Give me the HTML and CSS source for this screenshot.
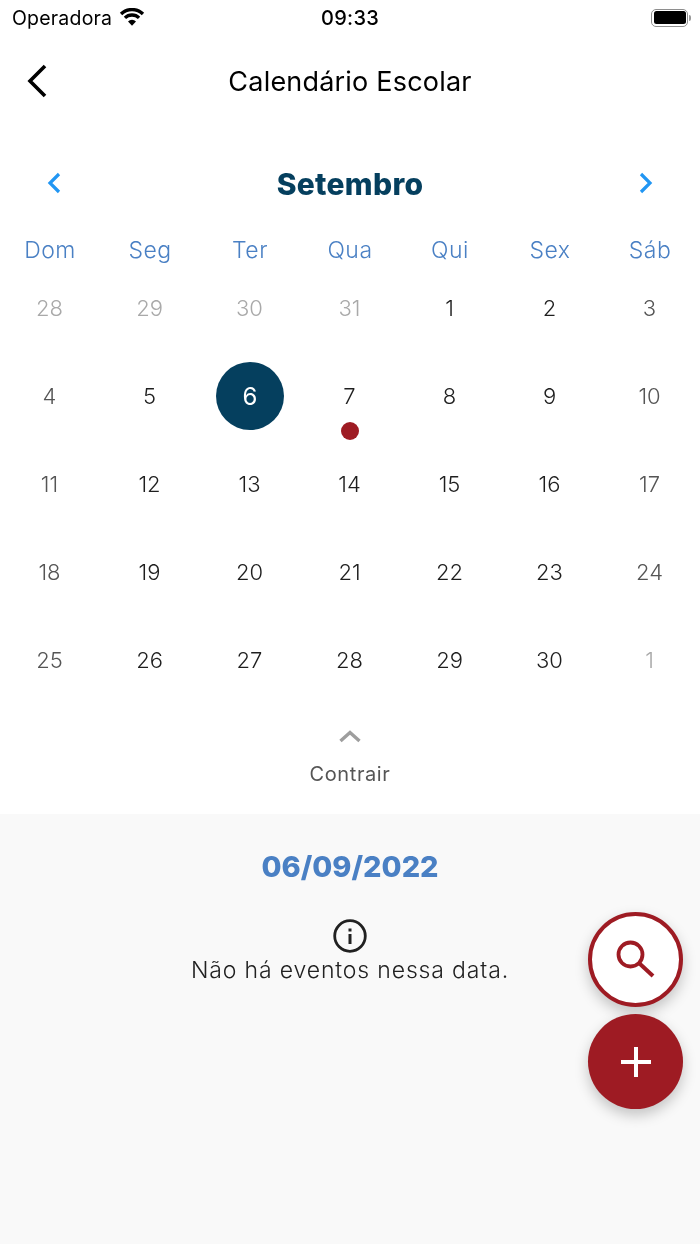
FILE: index.html
```html
<!DOCTYPE html>
<html lang="pt">
<head>
<meta charset="utf-8">
<title>Calendário Escolar</title>
<link rel="stylesheet" href="styles.css">
</head>
<body>
<div class="screen">
  <header class="status">
    <div class="status-left">
      <span class="carrier">Operadora</span>
      <svg class="wifi" width="26" height="18" viewBox="0 0 26 18"><path d="M2.040 6.040A15.500 15.500 0 0 1 23.960 6.040M5.930 9.930A10 10 0 0 1 20.070 9.930" fill="none" stroke="#000" stroke-width="3.300"/><path d="M13 17.800L9 13.500A5.600 5.600 0 0 1 17 13.500Z" fill="#000"/></svg>
    </div>
    <span class="clock">09:33</span>
    <div class="battery-wrap">
      <div class="battery"><div class="battery-fill"></div></div>
      <div class="battery-tip"></div>
    </div>
  </header>

  <nav class="nav">
    <svg class="back" width="24" height="34" viewBox="0 0 24 34"><path d="M20 2L5 17l15 15" fill="none" stroke="#000" stroke-width="3.600"/></svg>
    <h1 class="title">Calendário Escolar</h1>
  </nav>

  <section class="calendar">
    <div class="month-row">
      <svg class="month-arrow" width="16" height="22" viewBox="0 0 16 22"><path d="M13 2L4 11l9 9" fill="none" stroke="#2196f3" stroke-width="3.200"/></svg>
      <h2 class="month">Setembro</h2>
      <svg class="month-arrow" width="16" height="22" viewBox="0 0 16 22"><path d="M3 2l9 9-9 9" fill="none" stroke="#2196f3" stroke-width="3.200"/></svg>
    </div>
    <div class="weekdays">
      <span>Dom</span><span>Seg</span><span>Ter</span><span>Qua</span><span>Qui</span><span>Sex</span><span>Sáb</span>
    </div>
    <div class="days">
      <div class="day muted">28</div><div class="day muted">29</div><div class="day muted">30</div><div class="day muted">31</div><div class="day">1</div><div class="day">2</div><div class="day weekend">3</div>
      <div class="day weekend">4</div><div class="day">5</div><div class="day"><span class="selected">6</span></div><div class="day">7<span class="event-dot"></span></div><div class="day">8</div><div class="day">9</div><div class="day weekend">10</div>
      <div class="day weekend">11</div><div class="day">12</div><div class="day">13</div><div class="day">14</div><div class="day">15</div><div class="day">16</div><div class="day weekend">17</div>
      <div class="day weekend">18</div><div class="day">19</div><div class="day">20</div><div class="day">21</div><div class="day">22</div><div class="day">23</div><div class="day weekend">24</div>
      <div class="day weekend">25</div><div class="day">26</div><div class="day">27</div><div class="day">28</div><div class="day">29</div><div class="day">30</div><div class="day muted">1</div>
    </div>
    <div class="collapse">
      <svg width="24" height="14" viewBox="0 0 24 14"><path d="M2.500 12L12 3.500 21.500 12" fill="none" stroke="#9e9e9e" stroke-width="3.400"/></svg>
      <span class="collapse-label">Contrair</span>
    </div>
  </section>

  <section class="events">
    <div class="event-date">06/09/2022</div>
    <svg class="info" width="36" height="36" viewBox="0 0 36 36"><circle cx="18" cy="18" r="15.300" fill="none" stroke="#212121" stroke-width="2.800"/><rect x="16.500" y="16" width="3" height="10" fill="#212121"/><rect x="16.500" y="10.500" width="3" height="3" fill="#212121"/></svg>
    <p class="empty">Não há eventos nessa data.</p>
    <button class="fab fab-search" aria-label="Buscar">
      <svg width="44" height="44" viewBox="0 0 44 44"><circle cx="16.500" cy="16.500" r="12" fill="none" stroke="#9e1b23" stroke-width="3.800"/><path d="M25.500 25.500L39 38" fill="none" stroke="#9e1b23" stroke-width="4"/></svg>
    </button>
    <button class="fab fab-add" aria-label="Adicionar">
      <svg width="34" height="34" viewBox="0 0 34 34"><path d="M17 2v30M2 17h30" fill="none" stroke="#fff" stroke-width="4"/></svg>
    </button>
  </section>
</div>
</body>
</html>
```

FILE: styles.css
```css
* { box-sizing: border-box; }
html, body { margin: 0; padding: 0; }
body { background: #fff; font-family: "Inter", "Liberation Sans", sans-serif; }

.screen { width: 700px; height: 1244px; display: flex; flex-direction: column; overflow: hidden; will-change: transform; }

.status { height: 38px; padding: 0 9px 3px 12px; display: flex; align-items: center; justify-content: space-between; position: relative; color: #000; flex: none; }
.status-left { display: flex; align-items: center; gap: 7px; }
.carrier { font-size: 19.500px; letter-spacing: 0.2px; }
.wifi { display: block; margin-top: -1px; }
.clock { font-size: 20px; font-weight: 500; position: absolute; left: 0; right: 0; text-align: center; top: 6px; letter-spacing: 0.3px; }
.battery-wrap { display: flex; align-items: center; gap: 1px; }
.battery { width: 37px; height: 18px; border: 1.500px solid #8e8e8e; border-radius: 5px; padding: 1.500px; }
.battery-fill { width: 100%; height: 100%; background: #000; border-radius: 2.500px; }
.battery-tip { width: 2px; height: 6px; background: #9a9a9a; border-radius: 0 2px 2px 0; }

.nav { height: 86px; flex: none; display: flex; align-items: center; justify-content: center; position: relative; }
.back { position: absolute; left: 25px; top: 26px; }
.title { margin: 0; font-size: 27px; font-weight: 400; color: #000; letter-spacing: 0.2px; }

.calendar { flex: none; height: 690px; display: flex; flex-direction: column; }
.month-row { height: 38px; margin-top: 41px; padding: 0 46px; display: flex; align-items: center; justify-content: space-between; flex: none; }
.month-arrow { margin-top: -3px; }
.month { margin: 0; font-size: 30px; font-weight: 800; color: #053f5e; line-height: 38px; letter-spacing: 0.3px; }
.weekdays { display: grid; grid-template-columns: repeat(7, 100px); margin-top: 32px; height: 29px; align-items: center; text-align: center; font-size: 23px; font-weight: 300; color: #4a80c4; letter-spacing: 0.5px; flex: none; }
.days { display: grid; grid-template-columns: repeat(7, 100px); grid-auto-rows: 88px; flex: none; }
.day { position: relative; display: flex; align-items: center; justify-content: center; font-size: 22px; font-weight: 300; color: #1e1e1e; height: 88px; padding-right: 1px; }
.day.muted { color: #a9a9a9; }
.day.weekend { color: #555; }
.selected { width: 68px; height: 68px; margin-left: 1px; border-radius: 50%; background: #053f5e; color: #fff; display: flex; align-items: center; justify-content: center; font-weight: 400; font-size: 24px; }
.event-dot { position: absolute; left: 41px; top: 70px; width: 18px; height: 18px; border-radius: 50%; background: #9e1b23; }

.collapse { display: flex; flex-direction: column; align-items: center; margin-top: 25px; flex: none; }
.collapse-label { font-size: 20px; font-weight: 400; color: #555; margin-top: 19px; letter-spacing: 0.6px; }

.events { flex: 1; background: #f9f9f9; display: flex; flex-direction: column; align-items: center; position: relative; }
.event-date { font-size: 29px; font-weight: 800; color: #4a80c4; margin-top: 35px; line-height: 36px; }
.info { display: block; margin-top: 33px; }
.empty { margin: 2px 0 0; font-size: 23px; font-weight: 300; color: #212121; letter-spacing: 0.850px; line-height: 28px; }
.fab { position: absolute; left: 588px; width: 95px; height: 95px; border-radius: 50%; display: flex; align-items: center; justify-content: center; padding: 0; box-shadow: 0 6px 14px rgba(0,0,0,.22); }
.fab-search { top: 98px; background: #fff; border: 4px solid #9e1b23; }
.fab-add { top: 200px; background: #9e1b23; border: 0; }
```
